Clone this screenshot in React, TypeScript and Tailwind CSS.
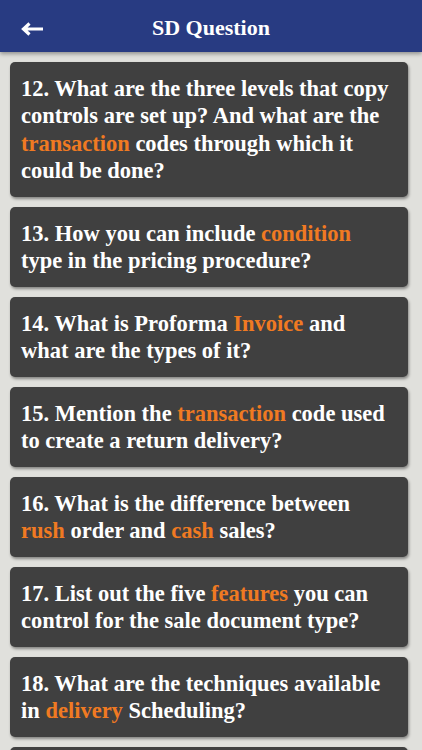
import type { ReactNode } from 'react';

type Question = { id: number; parts: ReactNode };

const Hi = ({ children }: { children: ReactNode }) => (
  <span className="text-[#f07a22]">{children}</span>
);

const questions: Question[] = [
  {
    id: 12,
    parts: (
      <>
        12. What are the three levels that copy controls are set up? And what are the <Hi>transaction</Hi> codes
        through which it could be done?
      </>
    ),
  },
  {
    id: 13,
    parts: (
      <>
        13. How you can include <Hi>condition</Hi> type in the pricing procedure?
      </>
    ),
  },
  {
    id: 14,
    parts: (
      <>
        14. What is Proforma <Hi>Invoice</Hi> and what are the types of it?
      </>
    ),
  },
  {
    id: 15,
    parts: (
      <>
        15. Mention the <Hi>transaction</Hi> code used to create a return delivery?
      </>
    ),
  },
  {
    id: 16,
    parts: (
      <>
        16. What is the difference between <Hi>rush</Hi> order and <Hi>cash</Hi> sales?
      </>
    ),
  },
  {
    id: 17,
    parts: (
      <>
        17. List out the five <Hi>features</Hi> you can control for the sale document type?
      </>
    ),
  },
  {
    id: 18,
    parts: (
      <>
        18. What are the techniques available in <Hi>delivery</Hi> Scheduling?
      </>
    ),
  },
  {
    id: 19,
    parts: <>19. What is the use of the item category in sales document?</>,
  },
];

export default function App() {
  return (
    <div className="flex h-[750px] w-[422px] flex-col overflow-hidden bg-[#e0e0dc] font-['Liberation_Serif','Times_New_Roman',serif]">
      {/* Header */}
      <div className="relative z-10 flex h-[52px] shrink-0 items-center justify-center bg-[#283b82] shadow-[0_2px_4px_rgba(0,0,0,0.35)]">
        <button className="absolute left-[20px] top-[22px] text-white">
          <svg width="24" height="14" viewBox="0 0 24 14" fill="none">
            <path d="M23 7H3M9.5 1.5L3.5 7l6 5.5" stroke="white" strokeWidth="3.2" />
          </svg>
        </button>
        <h1 className="pt-[2px] text-[22px] font-bold text-white">SD Question</h1>
      </div>

      {/* List */}
      <div className="flex flex-col gap-[10px] pt-[10px]">
        {questions.map((q) => (
          <div
            key={q.id}
            className="ml-[10px] mr-[14px] shrink-0 rounded-[5px] bg-[#404040] px-[11px] py-[12.5px] text-[22.5px] font-bold leading-[27.5px] text-white shadow-[1px_2px_3px_rgba(0,0,0,0.4)]"
          >
            {q.parts}
          </div>
        ))}
      </div>
    </div>
  );
}
